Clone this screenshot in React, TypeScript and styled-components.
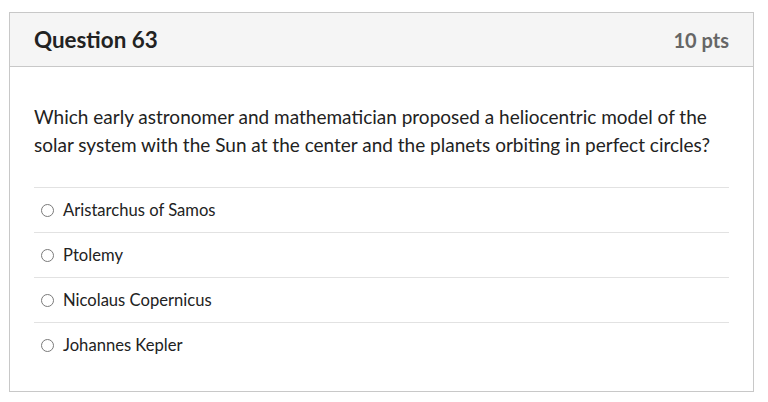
import React from "react";
import styled, { createGlobalStyle } from "styled-components";

const Global = createGlobalStyle`
  html, body { margin: 0; padding: 0; background: #ffffff; }
  body { font-family: Lato, "Open Sans", sans-serif; color: #222222; }
`;

const Page = styled.div`
  padding: 12px 14px 10px 9px;
`;

const Card = styled.section`
  border: 1px solid #c8c8c8;
  background: #ffffff;
`;

const Header = styled.header`
  display: flex;
  align-items: center;
  justify-content: space-between;
  height: 53px;
  padding: 0 24px;
  background: #f5f5f5;
  border-bottom: 1px solid #c8c8c8;
`;

const Title = styled.h2`
  margin: 0;
  font-size: 22.4px;
  font-weight: 700;
  color: #222222;
`;

const Points = styled.span`
  font-size: 20px;
  font-weight: 700;
  color: #666666;
`;

const Body = styled.div`
  padding: 36px 24px 24px;
`;

const QuestionText = styled.p`
  margin: 0 0 28px;
  font-size: 19px;
  line-height: 28px;
  color: #222222;
`;

const Answers = styled.div`
  display: flex;
  flex-direction: column;
`;

const Answer = styled.label`
  display: flex;
  align-items: center;
  gap: 9px;
  height: 44px;
  padding-left: 7px;
  border-top: 1px solid #e2e2e2;
  font-size: 16.6px;
  line-height: 20px;
  color: #222222;
  cursor: pointer;
`;

const Radio = styled.span`
  width: 13px;
  height: 13px;
  border-radius: 50%;
  border: 1px solid #7a7a7a;
  box-sizing: border-box;
  flex: none;
`;

const answers = [
  "Aristarchus of Samos",
  "Ptolemy",
  "Nicolaus Copernicus",
  "Johannes Kepler",
];

export default function App() {
  return (
    <Page>
      <Global />
      <Card>
        <Header>
          <Title>Question 63</Title>
          <Points>10 pts</Points>
        </Header>
        <Body>
          <QuestionText>
            Which early astronomer and mathematician proposed a heliocentric model of the
            solar system with the Sun at the center and the planets orbiting in perfect circles?
          </QuestionText>
          <Answers>
            {answers.map((a) => (
              <Answer key={a}>
                <Radio />
                {a}
              </Answer>
            ))}
          </Answers>
        </Body>
      </Card>
    </Page>
  );
}
